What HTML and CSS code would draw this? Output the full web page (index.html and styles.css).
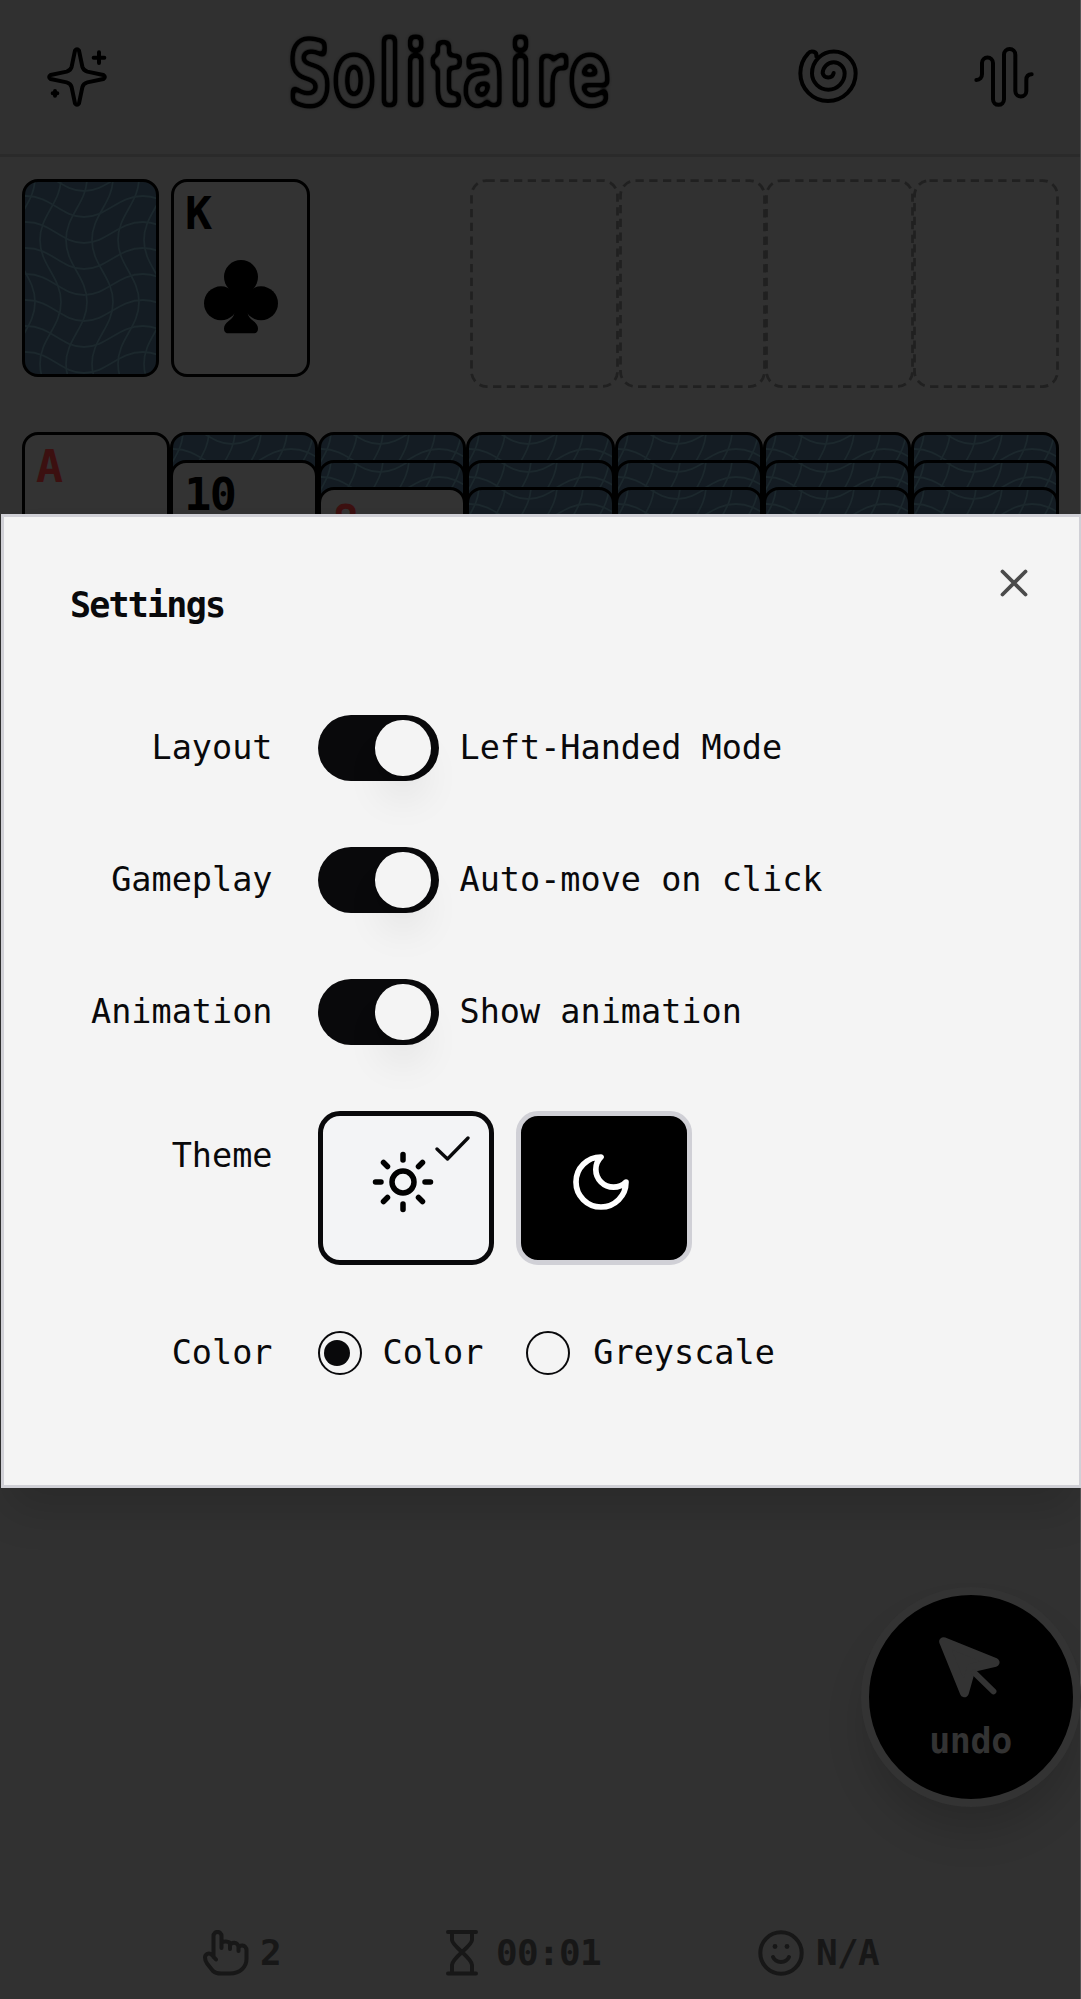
FILE: index.html
```html
<!DOCTYPE html>
<html lang="en">
<head>
<meta charset="utf-8">
<title>Solitaire</title>
<link rel="stylesheet" href="styles.css">
</head>
<body>
<div class="app">
  <header class="topbar">
    <svg class="icon sparkle" viewBox="138 138 186 186"><path d="M225 152Q231 143 237 152L247 200Q250 211 262 215L310 225Q319 231 310 237L262 247Q250 250 247 262L237 310Q231 319 225 310L215 262Q212 250 200 247L152 237Q143 231 152 225L200 215Q212 211 215 200ZM297 157v32M281 173h32M165 273v14M158 280h14"/></svg>
    <svg class="logo" viewBox="0 0 330 120">
      <filter id="outline" x="0" y="0" width="330" height="120" filterUnits="userSpaceOnUse">
        <feGaussianBlur stdDeviation="2.800"/>
        <feComponentTransfer><feFuncA type="table" tableValues="0 0.1 1 1 1 1 1 1 0.3 0 0"/></feComponentTransfer>
      </filter>
      <g filter="url(#outline)"><text transform="scale(.67 1)" y="85.500" x="32.900 98.500 151.600 190.500 236.400 292 347 393.100 450.500">Solitaire</text></g>
    </svg>
    <svg class="icon spiral" viewBox="110 140 186 186"><path d="M220 221A17 17 0 0 1 187 222A33 33 0 0 1 253 222A49 49 0 0 1 155 222A65.500 65.500 0 0 1 286 222A83 83 0 0 1 120 222C120 199 128 179 143 163C152 151 171 157 168 171"/></svg>
    <svg class="icon wave" viewBox="638 138 186 186"><path d="M648 240C659 240 665 232 665 222V189A16.500 16.500 0 0 1 698 189V298A16.500 16.500 0 0 0 731 298V164A16.500 16.500 0 0 1 765 164V273A16.500 16.500 0 0 0 798 273V240C798 229 804 223 814 223"/></svg>
  </header>

  <main class="board">
    <div class="upper">
      <div class="card back stock"></div>
      <div class="card waste">
        <span class="rank">K</span>
        <svg class="club" viewBox="611 779 222 222"><circle cx="722" cy="830" r="51"/><circle cx="662" cy="909" r="51"/><circle cx="782" cy="909" r="51"/><path d="M690 865H754L800 900L742 938Q743 951 760 963Q773 973 773 985Q773 999 758 999H686Q671 999 671 985Q671 973 684 963Q701 951 702 938L644 900Z"/></svg>
      </div>
      <div class="foundations">
        <svg class="slot" viewBox="0 0 149 209"><rect x="1.500" y="1.500" width="146" height="206" rx="15"/></svg>
        <svg class="slot" viewBox="0 0 149 209"><rect x="1.500" y="1.500" width="144" height="206" rx="15"/></svg>
        <svg class="slot" viewBox="0 0 149 209"><rect x="1.500" y="1.500" width="146" height="206" rx="15"/></svg>
        <svg class="slot" viewBox="0 0 149 209"><rect x="1.500" y="1.500" width="143" height="206" rx="15"/></svg>
      </div>
    </div>
    <div class="tableau">
      <div class="pile"><div class="card red"><span class="rank">A</span></div></div>
      <div class="pile"><div class="card back"></div><div class="card"><span class="rank">10</span></div></div>
      <div class="pile"><div class="card back"></div><div class="card back"></div><div class="card red"><span class="rank">8</span></div></div>
      <div class="pile"><div class="card back"></div><div class="card back"></div><div class="card back"></div></div>
      <div class="pile"><div class="card back"></div><div class="card back"></div><div class="card back"></div></div>
      <div class="pile"><div class="card back"></div><div class="card back"></div><div class="card back"></div></div>
      <div class="pile"><div class="card back"></div><div class="card back"></div><div class="card back"></div></div>
    </div>
  </main>

  <footer class="stats">
    <div class="stat moves"><svg viewBox="203 1930 46 46"><path d="M216 1959.500L212 1955C209 1952 205 1954 205 1957.500C205 1960 206 1962 207 1963.500L213 1971C215 1973 218 1973.500 221 1973.500H230C240 1973.500 246.500 1967 246.500 1959V1950C246.500 1944.500 238.500 1944 238.500 1949V1951M238.500 1950V1947C238.500 1941.500 230 1941.500 230 1946V1949M230 1947V1944.500C230 1940.500 221.500 1940.500 221.500 1944V1948M221.500 1946V1936C221.500 1930.500 213.500 1930.500 213.500 1936V1957"/></svg><span>2</span></div>
    <div class="stat time"><svg viewBox="439 1930 46 46"><path d="M448 1932H476M448 1973.500H476M452 1932V1940C452 1946 472 1958 472 1965V1973M472 1932V1940C472 1946 452 1958 452 1965V1973"/></svg><span>00:01</span></div>
    <div class="stat mood"><svg viewBox="758 1930 46 46"><circle cx="781" cy="1953" r="20.700"/><path d="M773 1957C776 1963.500 786 1963.500 789 1957"/><circle class="eye" cx="775" cy="1946.500" r="2.400"/><circle class="eye" cx="787" cy="1946.500" r="2.400"/></svg><span>N/A</span></div>
  </footer>
</div>

<button class="undo">
  <svg viewBox="353 525 200 200"><path class="arrow" d="M370 545L526 608L454 625L433 700Z"/><path class="tail" d="M462 638L521 696"/></svg>
  <span>undo</span>
</button>

<section class="dialog" role="dialog" aria-label="Settings">
  <svg class="close" viewBox="0 0 30 30"><path d="M3.500 3.500L26.500 26.500M26.500 3.500L3.500 26.500"/></svg>
  <h2>Settings</h2>
  <div class="form">
    <div class="row"><span class="label">Layout</span><span class="toggle"><i></i></span><span class="text">Left-Handed Mode</span></div>
    <div class="row"><span class="label">Gameplay</span><span class="toggle"><i></i></span><span class="text">Auto-move on click</span></div>
    <div class="row"><span class="label">Animation</span><span class="toggle"><i></i></span><span class="text">Show animation</span></div>
    <div class="row themes">
      <span class="label">Theme</span>
      <div class="theme light"><svg class="glyph" viewBox="-32 -32 64 64"><circle r="11"/><path d="M0-27.500V-22M0 22V27.500M-27.500 0H-22M22 0H27.500M-19.500-19.500L-15.500-15.500M15.500 15.500L19.500 19.500M-19.500 19.500L-15.500 15.500M15.500-15.500L19.500-19.500"/></svg><svg class="check" viewBox="0 0 36 28"><path d="M3 14L13.500 24L34 3"/></svg></div>
      <div class="theme dark"><svg class="glyph" viewBox="871 275 192 192"><path d="M901 232A75 75 0 1 0 976 307A49 49 0 0 1 901 232Z" transform="translate(66 64)"/></svg></div>
    </div>
    <div class="row colors"><span class="label">Color</span><span class="radio on"></span><span class="text">Color</span><span class="radio second"></span><span class="text">Greyscale</span></div>
  </div>
</section>
</body>
</html>
```

FILE: styles.css
```css
* { box-sizing: border-box; }
body {
  position: relative;
  margin: 0;
  width: 1081px;
  height: 1999px;
  overflow: hidden;
  background: #555;
  font-family: "DejaVu Sans Mono", "Liberation Mono", monospace;
}
.app {
  display: flex;
  flex-direction: column;
  width: 1080px;
  height: 1999px;
  background: #313131;
}

/* header */
.topbar {
  display: flex;
  align-items: flex-start;
  height: 157px;
  border-bottom: 3px solid #2a2a2a;
  background: #303030;
}
.icon {
  width: 62px;
  height: 62px;
  flex: none;
  fill: none;
  stroke: #000;
  stroke-width: 12;
  stroke-linecap: round;
  stroke-linejoin: round;
}
.sparkle { margin: 46px 0 0 46px; }
.logo { width: 330px; height: 120px; margin: 20px 0 0 180px; flex: none; overflow: visible; }
.logo text {
  font: bold 89px "DejaVu Sans", sans-serif;
  text-anchor: middle;
  fill: #000;
}
.spiral { margin: 46px 0 0 179px; }
.wave { margin: 46px 0 0 114px; }

/* cards */
.board { padding: 22px 21px 0 22px; flex: 1; }
.upper { display: flex; height: 209px; align-items: flex-start; }
.card {
  border: 3px solid #000;
  border-radius: 16px;
  background: #333;
  color: #000;
}
.back {
  background: #141c23 url("data:image/svg+xml,%3Csvg xmlns='http://www.w3.org/2000/svg' xmlns:xlink='http://www.w3.org/1999/xlink' width='148' height='209' fill='none' stroke='%231c282d' stroke-width='1.800'%3E%3Cdefs%3E%3Cpath id='h' d='M-55 20c24 0 34-21 59-21s35 21 58 21 34-21 59-21 35 21 59 21'/%3E%3Cpath id='v' d='M0-63c0 25 21 37 21 62s-21 37-21 62 21 37 21 62-21 37-21 62 21 37 21 62'/%3E%3C/defs%3E%3Cuse xlink:href='%23h' y='-34'/%3E%3Cuse xlink:href='%23h' y='-8'/%3E%3Cuse xlink:href='%23h' y='18'/%3E%3Cuse xlink:href='%23h' y='44'/%3E%3Cuse xlink:href='%23h' y='70'/%3E%3Cuse xlink:href='%23h' y='96'/%3E%3Cuse xlink:href='%23h' y='122'/%3E%3Cuse xlink:href='%23h' y='148'/%3E%3Cuse xlink:href='%23h' y='174'/%3E%3Cuse xlink:href='%23h' y='200'/%3E%3Cuse xlink:href='%23v' x='-8'/%3E%3Cuse xlink:href='%23v' x='18'/%3E%3Cuse xlink:href='%23v' x='44'/%3E%3Cuse xlink:href='%23v' x='70'/%3E%3Cuse xlink:href='%23v' x='96'/%3E%3Cuse xlink:href='%23v' x='122'/%3E%3Cuse xlink:href='%23v' x='148'/%3E%3C/svg%3E") no-repeat border-box;
}
.stock { width: 137px; height: 198px; }
.waste {
  display: flex;
  flex-direction: column;
  width: 139px;
  height: 198px;
  margin-left: 12px;
}
.rank {
  display: block;
  padding: 6px 0 0 11px;
  font-size: 45px;
  line-height: 52px;
  font-weight: 700;
  letter-spacing: -1.500px;
}
.red { color: #3c1010; }
.club { align-self: center; width: 74px; height: 74px; margin-top: 20px; fill: #000; }
.foundations { display: grid; grid-template-columns: 149px 146px 148px 146px; width: 589px; margin-left: auto; }
.slot { width: 149px; height: 209px; fill: none; stroke: #202020; stroke-width: 2.750; stroke-dasharray: 8.250 5.500; }
.tableau {
  display: grid;
  grid-template-columns: repeat(7, 1fr);
  margin-top: 44px;
  height: 260px;
}
.pile { display: flex; flex-direction: column; }
.pile .card { height: 209px; flex: none; }
.pile .card + .card { margin-top: -181.500px; }

/* bottom bar */
.stats { display: flex; height: 92px; padding-top: 23px; color: #171717; }
.stat {
  display: flex;
  height: 46px;
  align-items: center;
  gap: 13px;
  font-size: 36px;
  font-weight: 700;
  letter-spacing: -.7px;
}
.stat svg {
  width: 46px;
  height: 46px;
  fill: none;
  stroke: #171717;
  stroke-width: 4;
  stroke-linecap: round;
  stroke-linejoin: round;
}
.stat span { padding-bottom: 2px; }
.stat .eye { fill: #171717; stroke: none; }
.moves { width: 236px; margin-left: 203px; gap: 11px; }
.time { width: 319px; gap: 11px; }
.mood { gap: 12px; }

/* floating action */
.undo {
  position: absolute;
  left: 860.500px;
  top: 1586.500px;
  display: flex;
  flex-direction: column;
  align-items: center;
  width: 220px;
  height: 220px;
  padding: 40px 0 0;
  border: 8px solid #333;
  border-radius: 50%;
  background: #000;
  color: #333;
  font: 700 35px "DejaVu Sans Mono", monospace;
  letter-spacing: -.4px;
  box-shadow: 0 28px 42px -6px rgba(0, 0, 0, .17);
}
.undo svg {
  width: 66px;
  height: 66px;
  flex: none;
  fill: none;
  stroke: #333;
  stroke-linecap: round;
  stroke-linejoin: round;
}
.undo .arrow { fill: #333; stroke-width: 27; }
.undo .tail { stroke-width: 18; }
.undo span { line-height: 40px; margin-top: 20px; }

/* settings */
.dialog {
  position: absolute;
  left: 1px;
  top: 514px;
  width: 1081px;
  height: 974px;
  border: 3px solid #d0d0d6;
  background: #f4f4f4;
  color: #09090b;
  padding: 63px 67px;
  box-shadow: 0 28px 42px -8px rgba(0, 0, 0, .15);
}
.close {
  position: absolute;
  right: 50.500px;
  top: 51px;
  width: 30px;
  height: 30px;
  stroke: #4b4b4b;
  stroke-width: 3.800;
  stroke-linecap: round;
}
h2 {
  margin: 0 0 0 -1px;
  height: 50px;
  font-size: 35px;
  line-height: 50px;
  font-weight: 700;
  letter-spacing: -1.800px;
}
.form {
  display: flex;
  flex-direction: column;
  gap: 66px;
  margin: 85px 0 0 .500px;
  font-size: 33.500px;
}
.row { display: flex; align-items: center; height: 66px; white-space: nowrap; }
.label { width: 201px; margin-right: 45px; text-align: right; }
.row .label, .row .text { position: relative; top: -.500px; }
.toggle {
  display: flex;
  align-items: center;
  width: 121px;
  height: 66px;
  margin-right: 21px;
  padding-left: 57.500px;
  border-radius: 33px;
  background: #09090b;
}
.toggle i {
  width: 55.500px;
  height: 55.500px;
  border-radius: 50%;
  background: #f4f4f4;
  box-shadow: 0 28px 42px -8px rgba(0, 0, 0, .1), 0 11px 17px -11px rgba(0, 0, 0, .05);
}
.themes { height: 154px; align-items: flex-start; }
.themes .label { padding-top: 25px; }
.theme {
  position: relative;
  display: flex;
  justify-content: center;
  width: 176px;
  height: 154px;
  padding: 34px 6px 0 0;
  border: 5.500px solid #09090b;
  border-radius: 22px;
  background: #f3f4f6;
}
.dark { margin-left: 22px; border-color: #d0d0d6; background: #000; }
.glyph { width: 64px; height: 64px; fill: none; stroke: #000; stroke-width: 5.500; stroke-linecap: round; stroke-linejoin: round; }
.dark .glyph { stroke: #fff; stroke-width: 17; }
.check { position: absolute; right: 19px; top: 19px; width: 36px; height: 28px; fill: none; stroke: #09090b; stroke-width: 3.300; stroke-linecap: round; stroke-linejoin: round; }
.radio {
  display: flex;
  align-items: center;
  width: 44px;
  height: 44px;
  margin-right: 21px;
  border: 2.500px solid #09090b;
  border-radius: 50%;
}
.on::before { content: ""; width: 26px; height: 26px; margin-left: 4px; border-radius: 50%; background: #09090b; }
.second { margin-left: 43px; margin-right: 23px; }
.colors { height: 44px; }
```
